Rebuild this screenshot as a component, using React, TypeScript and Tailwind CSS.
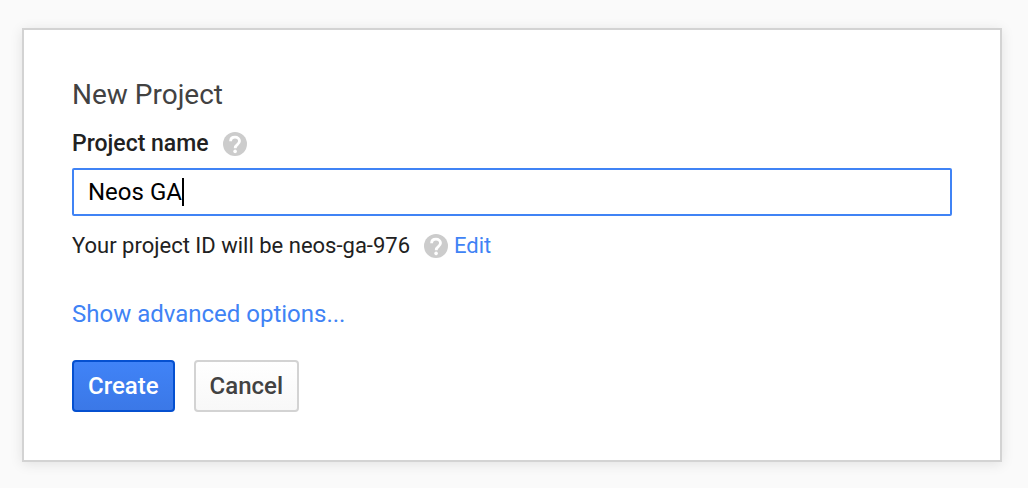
import { useId, useState } from "react";

function HelpButton({ label }: { label: string }) {
  return (
    <button type="button" aria-label={label} className="size-6 shrink-0">
      <svg viewBox="0 0 24 24" className="size-6" fill="none">
        <circle cx="12" cy="12" r="12" fill="#cccccc" />
        <path d="M7.600 9.200C7.600 6.700 9.500 5.200 12 5.200s4.500 1.500 4.500 3.900c0 1.700-.9 2.600-2.200 3.600-1.500 1.100-2.100 1.700-2.100 3.500" stroke="#ffffff" strokeWidth="2.800" />
        <circle cx="12.100" cy="19.400" r="1.800" fill="#ffffff" />
      </svg>
    </button>
  );
}

export default function App() {
  const nameId = useId();
  const [name, setName] = useState("Neos GA");

  return (
    <main className="min-h-screen bg-[#fafafa] px-[22px] pt-7 pb-6 font-['Roboto',sans-serif] text-[#212121]">
      <form
        onSubmit={(event) => event.preventDefault()}
        className="mr-1 border-2 border-[#d3d3d3] bg-white p-12 shadow-[0_2px_12px_rgba(0,0,0,0.1)]"
      >
        <h1 className="text-[28px] leading-[34px] text-[#424242]">New Project</h1>
        <div className="mt-5 flex h-6 items-center gap-3.5">
          <label htmlFor={nameId} className="text-[23px] leading-[26px] font-medium">
            Project name
          </label>
          <HelpButton label="About project names" />
        </div>
        <div className="relative mt-3">
          <input
            id={nameId}
            type="text"
            value={name}
            onChange={(event) => setName(event.target.value)}
            className="block h-12 w-full rounded-[2px] border-2 border-[#4083f5] bg-white px-3.5 text-2xl text-black outline-none"
          />
          <span aria-hidden="true" className="pointer-events-none absolute top-2.5 left-[110px] h-7 w-0.5 bg-black" />
        </div>
        <div className="mt-[18px] flex h-6 items-center text-[22px] leading-[26px]">
          <p className="mr-3.5">Your project ID will be neos-ga-976</p>
          <HelpButton label="About project IDs" />
          <a href="#edit" className="ml-1.5 text-[#4083f5]">Edit</a>
        </div>
        <a href="#advanced" className="mt-10 block w-fit text-2xl text-[#4083f5]">
          Show advanced options...
        </a>
        <div className="mt-[30px] flex gap-[19px]">
          <button type="submit" className="h-[52px] rounded-sm border-2 border-[#0550d0] bg-linear-to-b from-[#4083f7] to-[#3b78e7] px-3.5 text-2xl font-medium text-white">
            Create
          </button>
          <button type="button" className="h-[52px] rounded-sm border-2 border-[#d3d3d3] bg-linear-to-b from-white to-[#f8f8f8] px-3.5 text-2xl font-medium text-[#424242]">
            Cancel
          </button>
        </div>
      </form>
    </main>
  );
}
